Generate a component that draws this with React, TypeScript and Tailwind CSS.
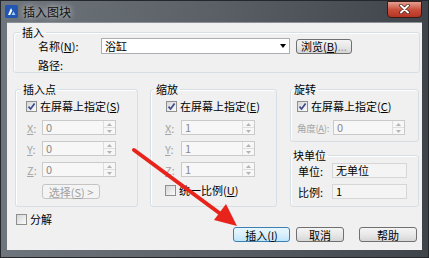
import React from 'react';

const Check: React.FC<{ checked?: boolean }> = ({ checked }) => (
  <span className="w-[11px] h-[11px] shrink-0 border border-[#8e8f8f] bg-linear-to-br from-[#d6d6d6] to-[#fbfbfb] flex items-center justify-center">
    {checked && (
      <svg width="9" height="9" viewBox="0 0 9 9">
        <path d="M1.5 4.6 L3.6 7 L7.6 1.4" stroke="#3b4a8c" strokeWidth="1.7" fill="none" />
      </svg>
    )}
  </span>
);

const Spin: React.FC<{ value: string; width: string }> = ({ value, width }) => (
  <div className={`flex h-[15px] ${width} border border-[#cacaca] bg-[#f7f7f7]`}>
    <span className="flex-1 pl-[3px] leading-[13px] text-[#8a8a8a]">{value}</span>
    <div className="w-[12px] flex flex-col border-l border-[#dedede]">
      <span className="flex-1 flex items-center justify-center border-b border-[#dedede]">
        <svg width="5" height="3" viewBox="0 0 5 3"><path d="M0 3 L2.5 0 L5 3Z" fill="#b4b4b4" /></svg>
      </span>
      <span className="flex-1 flex items-center justify-center">
        <svg width="5" height="3" viewBox="0 0 5 3"><path d="M0 0 L2.5 3 L5 0Z" fill="#b4b4b4" /></svg>
      </span>
    </div>
  </div>
);

const Btn: React.FC<{ w: string; children: React.ReactNode; primary?: boolean; disabled?: boolean; className?: string }> = ({ w, children, primary, disabled, className = '' }) => {
  let look = 'border-[#707070] bg-linear-to-b from-[#f4f4f4] via-[#e8e8e8] to-[#d6d6d6] text-black';
  if (primary) look = 'border-[#3c7fb1] bg-linear-to-b from-[#eaf6fd] via-[#d9f0fc] to-[#bee6fd] text-black';
  if (disabled) look = 'border-[#c4c4c4] bg-[#f4f4f4] text-[#a0a0a0]';
  return (
    <div className={`${w} h-[15px] border rounded-[3px] flex items-center justify-center whitespace-nowrap leading-[12px] ${look} ${className}`}>
      {children}
    </div>
  );
};

const legendCls = 'px-[2px] leading-[12px]';
const groupCls = 'border border-[#d5dfe5] rounded-[3px] shadow-[inset_1px_1px_0_#ffffff]';

export default function App() {
  return (
    <div className="relative w-[429px] h-[258px] overflow-hidden bg-linear-to-r from-[#6f757c] via-[#5a6066] to-[#3f444a] border border-[#24282c] font-['Noto_Sans_CJK_SC','Noto_Sans',sans-serif] text-[11px] leading-[12px] text-black flex flex-col">
      {/* title bar */}
      <div className="h-[21px] flex items-center shrink-0">
        <svg className="ml-[4px]" width="13" height="13" viewBox="0 0 13 13">
          <rect x="0" y="0" width="13" height="13" rx="1.5" fill="#2356b0" />
          <path d="M3 10 L6 3 L7.2 5.6 L5.2 10Z" fill="#ffffff" />
          <path d="M6.6 10 L8.4 6.2 L10.5 10Z" fill="#9fd0ff" />
        </svg>
        <span className="ml-[5px] text-[12px] text-[#111] [text-shadow:0_0_6px_#ffffff]">插入图块</span>
        <div className="ml-auto mr-[6px] -mt-[5px] w-[35px] h-[17px] rounded-b-[4px] border border-[#3a1a14] bg-linear-to-b from-[#e3a092] via-[#c9503c] to-[#b73322] flex items-center justify-center">
          <svg width="11" height="10" viewBox="0 0 11 10">
            <path d="M2 1.5 L9 8.5 M9 1.5 L2 8.5" stroke="#4a1e16" strokeWidth="3.4" strokeLinecap="round" />
            <path d="M2 1.5 L9 8.5 M9 1.5 L2 8.5" stroke="#ffffff" strokeWidth="2" strokeLinecap="round" />
          </svg>
        </div>
      </div>

      {/* client area */}
      <div className="ml-[6px] w-[415px] h-[228px] bg-[#f0f0f0] flex flex-col shrink-0 border-t border-[#8b9197]">
        {/* 插入 */}
        <fieldset className={`mt-[3px] ml-[6px] w-[407px] h-[47px] ${groupCls}`}>
          <legend className={`ml-[6px] ${legendCls}`}>插入</legend>
          <div className="flex items-center h-[16px] ml-[24px]">
            <span className="w-[63px] whitespace-nowrap">名称(<span className="underline">N</span>):</span>
            <div className="w-[189px] h-[16px] border border-[#abadb3] bg-white flex items-center">
              <span className="pl-[3px] flex-1">浴缸</span>
              <svg className="mr-[3px]" width="6" height="4" viewBox="0 0 6 4"><path d="M0 0 L6 0 L3 4Z" fill="#000" /></svg>
            </div>
            <Btn w="w-[56px]" className="ml-[6px]">
              浏览(<span className="underline">B</span>)<span className="text-[#9a9a9a]">...</span>
            </Btn>
          </div>
          <div className="flex items-center h-[12px] mt-[5px] ml-[24px]">路径:</div>
        </fieldset>

        {/* three groups */}
        <div className="flex mt-[10px] h-[124px]">
          {/* 插入点 */}
          <fieldset className={`ml-[8px] w-[123px] h-[124px] ${groupCls}`}>
            <legend className={`ml-[5px] ${legendCls}`}>插入点</legend>
            <div className="flex items-center gap-[3px] h-[12px] mt-[5px] ml-[10px] whitespace-nowrap">
              <Check checked />
              <span>在屏幕上指定(<span className="underline">S</span>)</span>
            </div>
            {['X', 'Y', 'Z'].map((l, i) => (
              <div key={l} className={`flex items-center h-[15px] ml-[11px] ${i === 0 ? 'mt-[8px]' : 'mt-[6px]'}`}>
                <span className="w-[15px] text-[#a5a5a5]"><span className="underline">{l}</span>:</span>
                <Spin value="0" width="w-[74px]" />
              </div>
            ))}
            <Btn w="w-[58px]" disabled className="mt-[7px] ml-[26px]">
              选择(<span className="underline">S</span>) &gt;
            </Btn>
          </fieldset>

          {/* 缩放 */}
          <fieldset className={`ml-[12px] w-[127px] h-[124px] ${groupCls}`}>
            <legend className={`ml-[3px] ${legendCls}`}>缩放</legend>
            <div className="flex items-center gap-[3px] h-[12px] mt-[5px] ml-[15px] whitespace-nowrap">
              <Check checked />
              <span>在屏幕上指定(<span className="underline">E</span>)</span>
            </div>
            {['X', 'Y', 'Z'].map((l, i) => (
              <div key={l} className={`flex items-center h-[15px] ml-[14px] ${i === 0 ? 'mt-[8px]' : 'mt-[6px]'}`}>
                <span className="w-[16px] text-[#a5a5a5]"><span className="underline">{l}</span>:</span>
                <Spin value="1" width="w-[74px]" />
              </div>
            ))}
            <div className="flex items-center gap-[3px] h-[12px] mt-[7px] ml-[14px] whitespace-nowrap">
              <Check />
              <span>统一比例(<span className="underline">U</span>)</span>
            </div>
          </fieldset>

          {/* 旋转 + 块单位 */}
          <div className="ml-[13px] w-[129px] flex flex-col">
            <fieldset className={`w-[129px] h-[59px] ${groupCls}`}>
              <legend className={`ml-[1px] ${legendCls}`}>旋转</legend>
              <div className="flex items-center gap-[3px] h-[12px] mt-[5px] ml-[6px] whitespace-nowrap">
                <Check checked />
                <span>在屏幕上指定(<span className="underline">C</span>)</span>
              </div>
              <div className="flex items-center h-[15px] mt-[8px] ml-[6px]">
                <span className="w-[36px] whitespace-nowrap text-[9.5px] tracking-[-0.3px] text-[#a5a5a5]">角度(<span className="underline">A</span>):</span>
                <Spin value="0" width="w-[72px]" />
              </div>
            </fieldset>
            <fieldset className={`mt-[7px] w-[129px] h-[58px] ${groupCls}`}>
              <legend className={`ml-[0px] ${legendCls}`}>块单位</legend>
              <div className="flex items-center h-[15px] mt-[2px] ml-[7px]">
                <span className="w-[34px]">单位:</span>
                <div className="w-[75px] h-[15px] border border-[#d6d6d6] bg-[#f4f4f4] pl-[3px] leading-[13px]">无单位</div>
              </div>
              <div className="flex items-center h-[15px] mt-[6px] ml-[7px]">
                <span className="w-[34px]">比例:</span>
                <div className="w-[75px] h-[15px] border border-[#d6d6d6] bg-[#f4f4f4] pl-[3px] leading-[13px]">1</div>
              </div>
            </fieldset>
          </div>
        </div>

        {/* 分解 */}
        <div className="flex items-center gap-[3px] h-[12px] mt-[6px] ml-[9px]">
          <Check />
          <span>分解</span>
        </div>

        {/* buttons */}
        <div className="flex mt-[2px] pl-[226px]">
          <Btn w="w-[57px]" primary>插入(<span className="underline">I</span>)</Btn>
          <Btn w="w-[48px]" className="ml-[6px]">取消</Btn>
          <Btn w="w-[58px]" className="ml-[15px]">帮助</Btn>
        </div>
      </div>

      {/* red arrow overlay */}
      <svg className="absolute left-0 top-0 pointer-events-none" width="429" height="258" viewBox="0 0 429 258">
        <line x1="133" y1="149" x2="221" y2="214" stroke="#e8231b" strokeWidth="4" strokeLinecap="round" />
        <path d="M236 225 L213 219 L225 203Z" fill="#e8231b" />
      </svg>
    </div>
  );
}
